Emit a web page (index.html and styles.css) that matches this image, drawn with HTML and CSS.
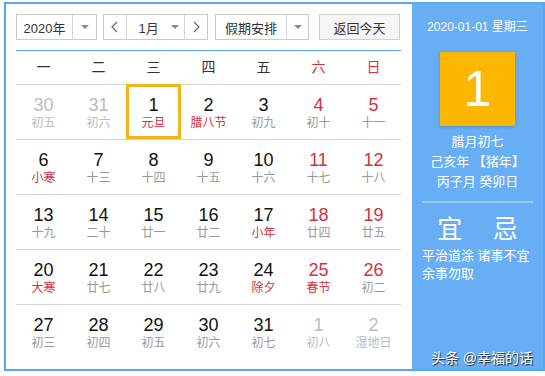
FILE: index.html
```html
<!DOCTYPE html>
<html lang="zh-CN">
  <head>
    <meta charset="UTF-8" />
    <meta name="viewport" content="width=device-width, initial-scale=1.0" />
    <title>万年历</title>
    <link rel="stylesheet" href="styles.css">
  </head>
  <body>
    <div id="calendar">
      <div id="main">
        <div class="toolbar">
          <div class="select year">
            <span class="label">2020年</span>
            <span class="arrow"><i class="tri"></i></span>
          </div>
          <div class="select month">
            <span class="nav prev">
              <svg width="7" height="12" viewBox="0 0 7 12"><polyline points="6,1 1,6 6,11" fill="none" stroke="#666" stroke-width="1.2" /></svg>
            </span>
            <span class="label">1月</span>
            <span class="arrow plain"><i class="tri"></i></span>
            <span class="nav next">
              <svg width="7" height="12" viewBox="0 0 7 12"><polyline points="1,1 6,6 1,11" fill="none" stroke="#666" stroke-width="1.2" /></svg>
            </span>
          </div>
          <div class="select holiday">
            <span class="label">假期安排</span>
            <span class="arrow"><i class="tri"></i></span>
          </div>
          <button class="today-btn">返回今天</button>
        </div>

        <div class="week">
          <span>一</span><span>二</span><span>三</span><span>四</span><span>五</span>
          <span class="red">六</span><span class="red">日</span>
        </div>

        <div class="row">
          <div class="day other"><b>30</b><em>初五</em></div>
          <div class="day other"><b>31</b><em>初六</em></div>
          <div class="day today"><b>1</b><em class="red">元旦</em></div>
          <div class="day"><b>2</b><em class="red">腊八节</em></div>
          <div class="day"><b>3</b><em>初九</em></div>
          <div class="day"><b class="red">4</b><em>初十</em></div>
          <div class="day"><b class="red">5</b><em>十一</em></div>
        </div>
        <div class="row">
          <div class="day"><b>6</b><em class="red">小寒</em></div>
          <div class="day"><b>7</b><em>十三</em></div>
          <div class="day"><b>8</b><em>十四</em></div>
          <div class="day"><b>9</b><em>十五</em></div>
          <div class="day"><b>10</b><em>十六</em></div>
          <div class="day"><b class="red">11</b><em>十七</em></div>
          <div class="day"><b class="red">12</b><em>十八</em></div>
        </div>
        <div class="row">
          <div class="day"><b>13</b><em>十九</em></div>
          <div class="day"><b>14</b><em>二十</em></div>
          <div class="day"><b>15</b><em>廿一</em></div>
          <div class="day"><b>16</b><em>廿二</em></div>
          <div class="day"><b>17</b><em class="red">小年</em></div>
          <div class="day"><b class="red">18</b><em>廿四</em></div>
          <div class="day"><b class="red">19</b><em>廿五</em></div>
        </div>
        <div class="row">
          <div class="day"><b>20</b><em class="red">大寒</em></div>
          <div class="day"><b>21</b><em>廿七</em></div>
          <div class="day"><b>22</b><em>廿八</em></div>
          <div class="day"><b>23</b><em>廿九</em></div>
          <div class="day"><b>24</b><em class="red">除夕</em></div>
          <div class="day"><b class="red">25</b><em class="red">春节</em></div>
          <div class="day"><b class="red">26</b><em>初二</em></div>
        </div>
        <div class="row">
          <div class="day"><b>27</b><em>初三</em></div>
          <div class="day"><b>28</b><em>初四</em></div>
          <div class="day"><b>29</b><em>初五</em></div>
          <div class="day"><b>30</b><em>初六</em></div>
          <div class="day"><b>31</b><em>初七</em></div>
          <div class="day other"><b>1</b><em>初八</em></div>
          <div class="day other"><b>2</b><em>湿地日</em></div>
        </div>
      </div>

      <div id="side">
        <div class="side-date">2020-01-01 星期三</div>
        <div class="big-day">1</div>
        <div class="lunar">
          <div>腊月初七</div>
          <div>己亥年 【猪年】</div>
          <div>丙子月 癸卯日</div>
        </div>
        <div class="divider"></div>
        <div class="yiji">
          <span>宜</span><span>忌</span>
        </div>
        <div class="yiji-text">平治道涂 诸事不宜 余事勿取</div>
        <div class="mark">头条 @幸福的话</div>
      </div>
    </div>
  </body>
</html>
```

FILE: styles.css
```css
body {
  margin: 0;
  padding: 0;
  background-color: white;
  font-family: "Liberation Sans", "Noto Sans CJK SC", sans-serif;
  overflow: hidden;
}
#calendar {
  display: flex;
  margin: 2px 0 0 4px;
  width: 541px;
  height: 369px;
  box-sizing: border-box;
  border: 2px solid #5ba7ef;
}
#main {
  width: 406px;
  box-sizing: border-box;
  padding: 10px 11px 0 10px;
  background-color: white;
}
.toolbar {
  display: flex;
  height: 26px;
  margin-bottom: 10px;
  font-size: 13px;
  color: #333;
}
.select {
  display: flex;
  box-sizing: border-box;
  height: 26px;
  border: 1px solid #c9c9c9;
  background-color: white;
}
.select .label {
  display: flex;
  align-items: center;
  justify-content: center;
}
.select .arrow {
  display: flex;
  align-items: center;
  justify-content: center;
  border-left: 1px solid #d6d6d6;
}
.select .arrow.plain {
  border-left: none;
}
.tri {
  display: block;
  width: 0;
  height: 0;
  border-left: 4px solid transparent;
  border-right: 4px solid transparent;
  border-top: 4px solid #888;
}
.year {
  width: 81px;
}
.year .label {
  width: 55px;
}
.year .arrow {
  flex: 1;
}
.month {
  width: 105px;
  margin-left: 6px;
}
.month .nav {
  width: 22px;
  display: flex;
  align-items: center;
  justify-content: center;
}
.month .prev {
  border-right: 1px solid #d6d6d6;
}
.month .next {
  border-left: 1px solid #d6d6d6;
}
.month .label {
  width: 36px;
  padding-left: 4px;
}
.month .arrow {
  width: 18px;
}
.holiday {
  width: 94px;
  margin-left: 7px;
}
.holiday .label {
  width: 70px;
}
.holiday .arrow {
  flex: 1;
}
.today-btn {
  width: 81px;
  height: 26px;
  margin-left: 10px;
  border: 1px solid #d0d0d0;
  background-color: #f6f6f6;
  font-family: inherit;
  font-size: 13px;
  color: #333;
  padding: 0;
}
.week {
  display: grid;
  grid-template-columns: repeat(7, 55px);
  height: 34px;
  box-sizing: border-box;
  border-top: 1px solid #5ba7ef;
  font-size: 14px;
  line-height: 33px;
  text-align: center;
  color: #333;
}
.row {
  display: grid;
  grid-template-columns: repeat(7, 55px);
  border-top: 1px solid #d4d4d4;
}
.day {
  height: 54px;
  box-sizing: border-box;
  padding-top: 10px;
  text-align: center;
}
.day b {
  display: block;
  font-weight: normal;
  font-size: 18px;
  line-height: 20px;
  color: #111;
}
.day em {
  display: block;
  font-style: normal;
  font-size: 12px;
  line-height: 16px;
  color: #999;
}
.day.other b,
.day.other em {
  color: #bbb;
}
.day.today {
  height: 55px;
  margin-top: -1px;
  padding-top: 8px;
  border: 3px solid #f5b316;
}
.red,
.day b.red,
.day em.red {
  color: #d2323c;
}
#side {
  display: flex;
  flex-direction: column;
  width: 131px;
  box-sizing: border-box;
  padding: 13px 10px 1px 10px;
  background-color: #68aef5;
  color: white;
}
.side-date {
  font-size: 12px;
  line-height: 20px;
  text-align: center;
  white-space: nowrap;
}
.big-day {
  width: 75px;
  height: 74px;
  margin: 15px auto 0;
  background-color: #fdb700;
  box-shadow: 0 1px 3px rgba(0, 0, 0, 0.2);
  font-size: 50px;
  line-height: 74px;
  text-align: center;
}
.lunar {
  margin-top: 6px;
  font-size: 13px;
  line-height: 20px;
  text-align: center;
  white-space: nowrap;
}
.divider {
  height: 2px;
  margin-top: 9px;
  background-color: #9acaf8;
}
.yiji {
  display: flex;
  margin-top: 11px;
  font-size: 25px;
  line-height: 30px;
}
.yiji span {
  flex: 1;
  text-align: center;
}
.yiji-text {
  margin-top: 3px;
  font-size: 13px;
  line-height: 18px;
}
.mark {
  margin-top: auto;
  font-size: 14px;
  line-height: 20px;
  text-align: right;
  white-space: nowrap;
  text-shadow: 1px 1px 1px #222;
}
```
